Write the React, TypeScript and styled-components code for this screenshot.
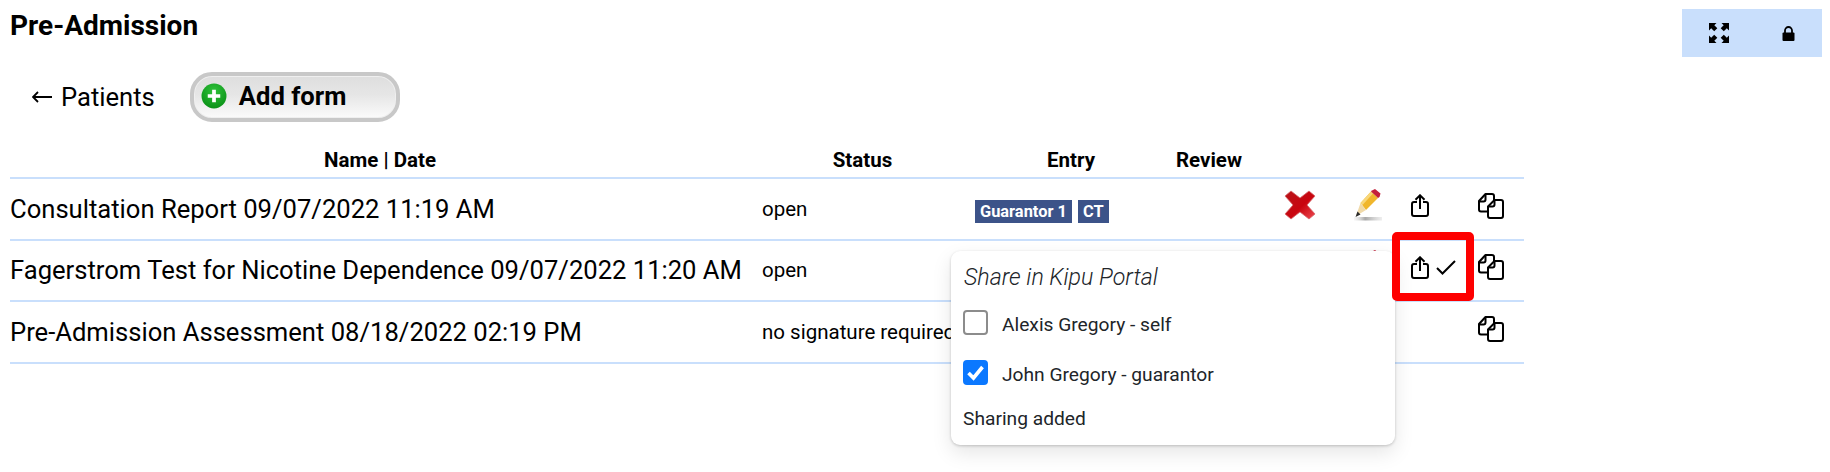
import styled, { createGlobalStyle } from 'styled-components';

const rows = [
  {
    name: 'Consultation Report 09/07/2022 11:19 AM',
    status: 'open',
    badges: ['Guarantor 1', 'CT'],
    editable: true,
    shared: false,
    shareable: true,
  },
  {
    name: 'Fagerstrom Test for Nicotine Dependence 09/07/2022 11:20 AM',
    status: 'open',
    badges: [],
    editable: true,
    shared: true,
    shareable: true,
  },
  {
    name: 'Pre-Admission Assessment 08/18/2022 02:19 PM',
    status: 'no signature required',
    badges: [],
    editable: false,
    shared: false,
    shareable: false,
  },
];

const checkMark =
  "data:image/svg+xml,%3Csvg xmlns='http://www.w3.org/2000/svg' viewBox='0 0 25 25'%3E%3Cpath d='M5.500 13l5 5 9-11' fill='none' stroke='%23fff' stroke-width='3.600'/%3E%3C/svg%3E";

function DeleteIcon() {
  return (
    <svg width="32" height="32" viewBox="0 0 32 32">
      <defs>
        <linearGradient id="xRed" x1="0" y1="0" x2="1" y2="1">
          <stop offset="0" stopColor="#b81419" />
          <stop offset="0.55" stopColor="#c9050f" />
          <stop offset="1" stopColor="#ee4a52" />
        </linearGradient>
      </defs>
      <path
        d="M7 2 16 9 25 2 31 7 23 16 31 25 25 30 16 23 7 30 1 25 9 16 1 7Z"
        fill="url(#xRed)"
        stroke="#d6686c"
        strokeWidth="0.8"
        strokeLinejoin="round"
      />
    </svg>
  );
}

function EditIcon() {
  return (
    <svg width="30" height="32" viewBox="0 0 30 32">
      <defs>
        <linearGradient id="pencilShadow" x1="0" y1="0" x2="1" y2="0">
          <stop offset="0" stopColor="#d8d8d8" stopOpacity="0.2" />
          <stop offset="0.4" stopColor="#a8a8a8" />
          <stop offset="1" stopColor="#c8c8c8" stopOpacity="0.3" />
        </linearGradient>
      </defs>
      <rect x="1" y="28" width="28" height="3.500" fill="url(#pencilShadow)" />
      <path d="M7.500 14 18 2.500 25 9 13 21Z" fill="#f0b62c" />
      <path d="M7.500 14 18 2.500 20 4.500 9.500 16Z" fill="#f8d77a" />
      <path d="M7.500 14 13 21 3 27Z" fill="#f0d9a8" />
      <path d="M4.500 22.500 7.500 25.500 2.500 28Z" fill="#2c2c2c" />
      <path d="M19 1.500 22 0 27.500 4.500 26.500 8 25 9 18 2.500Z" fill="#c4203a" />
    </svg>
  );
}

function ShareIcon() {
  return (
    <svg width="18" height="23" viewBox="0 0 18 23" fill="none" stroke="#000" strokeWidth="2">
      <path d="M6 8H3a2 2 0 0 0-2 2v10a2 2 0 0 0 2 2h12a2 2 0 0 0 2-2V10a2 2 0 0 0-2-2h-3" />
      <path d="M9 15V1.500M4.500 5.800 9 1.300l4.500 4.500" />
    </svg>
  );
}

function CheckIcon() {
  return (
    <svg width="20" height="15" viewBox="0 0 20 15" fill="none" stroke="#000" strokeWidth="2">
      <path d="M1 8l5.500 5.500L19 1" />
    </svg>
  );
}

function CopyIcon() {
  return (
    <svg width="26" height="26" viewBox="0 0 26 26" fill="none" stroke="#000" strokeWidth="2" strokeLinejoin="round">
      <path d="M10 18.500H3a2 2 0 0 1-2-2V8l6.500-7H14a2 2 0 0 1 2 2v4" />
      <path d="M7.500 1v5.500a2 2 0 0 1-2 2H1" />
      <path d="M16.500 7H23a2 2 0 0 1 2 2v14a2 2 0 0 1-2 2H12a2 2 0 0 1-2-2V13.500Z" />
      <path d="M16.500 7v4.500a2 2 0 0 1-2 2H10" />
    </svg>
  );
}

function BackArrow() {
  return (
    <svg width="20" height="12" viewBox="0 0 20 12" fill="none" stroke="#000">
      <path d="M1 6h19" strokeWidth="2" />
      <path d="M6 1 1 6l5 5" strokeWidth="1.800" />
    </svg>
  );
}

function ExpandIcon() {
  return (
    <svg width="20" height="20" viewBox="0 0 20 20" fill="#000">
      <path d="M0 0H7.500L5.300 2.200 8.300 5.200 5.200 8.300 2.200 5.300 0 7.500Z" />
      <path d="M20 0H12.500L14.700 2.200 11.700 5.200 14.800 8.300 17.800 5.300 20 7.500Z" />
      <path d="M0 20H7.500L5.300 17.800 8.300 14.800 5.200 11.700 2.200 14.700 0 12.500Z" />
      <path d="M20 20H12.500L14.700 17.800 11.700 14.800 14.800 11.700 17.800 14.700 20 12.500Z" />
    </svg>
  );
}

function LockIcon() {
  return (
    <svg width="13" height="15" viewBox="0 0 13 15">
      <path d="M3 7V4.500a3.500 3.500 0 0 1 7 0V7" fill="none" stroke="#000" strokeWidth="1.800" />
      <rect x="0.500" y="6.500" width="12" height="8.500" rx="1" fill="#000" />
    </svg>
  );
}

function AddIcon() {
  return (
    <svg width="26" height="26" viewBox="0 0 25 25">
      <defs>
        <radialGradient id="addGreen" cx="0.5" cy="0.3" r="0.8">
          <stop offset="0" stopColor="#2fc23a" />
          <stop offset="1" stopColor="#058a12" />
        </radialGradient>
      </defs>
      <circle cx="12.500" cy="12.500" r="12" fill="url(#addGreen)" />
      <path d="M10.700 6.500h3.600v4.200h4.200v3.600h-4.200v4.200h-3.600v-4.200H6.500v-3.600h4.200Z" fill="#fff" />
    </svg>
  );
}

export default function App() {
  return (
    <>
      <GlobalStyle />
      <Page>
        <TopBar>
          <Title>Pre-Admission</Title>
          <ViewTools>
            <ExpandIcon />
            <LockIcon />
          </ViewTools>
        </TopBar>
        <NavRow>
          <BackLink>
            <BackArrow />
            Patients
          </BackLink>
          <AddFormButton>
            <AddIcon />
            Add form
          </AddFormButton>
        </NavRow>
        <FormsTable>
          <colgroup>
            <col style={{ width: 740 }} />
            <col style={{ width: 225 }} />
            <col style={{ width: 192 }} />
            <col style={{ width: 84 }} />
            <col style={{ width: 98 }} />
            <col style={{ width: 38 }} />
            <col style={{ width: 73 }} />
            <col style={{ width: 64 }} />
          </colgroup>
          <thead>
            <tr>
              <HeadCell>Name | Date</HeadCell>
              <HeadCell>Status</HeadCell>
              <HeadCell>Entry</HeadCell>
              <HeadCell>Review</HeadCell>
              <HeadCell />
              <HeadCell />
              <HeadCell />
              <HeadCell />
            </tr>
          </thead>
          <tbody>
            {rows.map((row) => (
              <tr key={row.name}>
                <NameCell>{row.name}</NameCell>
                <StatusCell>
                  <StatusText>{row.status}</StatusText>
                </StatusCell>
                <EntryCell>
                  <BadgeList>
                    {row.badges.map((badge) => (
                      <Badge key={badge}>{badge}</Badge>
                    ))}
                  </BadgeList>
                </EntryCell>
                <BodyCell />
                <IconCell>{row.editable && <DeleteIcon />}</IconCell>
                <IconCell>{row.editable && <EditIcon />}</IconCell>
                <ShareCell>
                  {row.shareable && (
                    <ShareGroup>
                      <ShareIcon />
                      {row.shared && <CheckIcon />}
                    </ShareGroup>
                  )}
                </ShareCell>
                <CopyCell>
                  <CopyIcon />
                </CopyCell>
              </tr>
            ))}
          </tbody>
        </FormsTable>
        <SharePopover>
          <PopoverTitle>Share in Kipu Portal</PopoverTitle>
          <ShareOption>
            <ShareCheckbox type="checkbox" />
            <OptionText>Alexis Gregory - self</OptionText>
          </ShareOption>
          <ShareOption>
            <ShareCheckbox type="checkbox" defaultChecked />
            <OptionText>John Gregory - guarantor</OptionText>
          </ShareOption>
          <PopoverStatus>Sharing added</PopoverStatus>
        </SharePopover>
        <Highlight />
      </Page>
    </>
  );
}

const GlobalStyle = createGlobalStyle`
  html, body {
    margin: 0;
    background: #fff;
  }
  body {
    font-family: Roboto, "Liberation Sans", sans-serif;
    color: #000;
  }
`;

const Page = styled.div`
  position: relative;
  width: 1830px;
  height: 472px;
  overflow: hidden;
  padding: 9px 8px 0 10px;
  box-sizing: border-box;
`;

const TopBar = styled.div`
  display: flex;
  justify-content: space-between;
  align-items: flex-start;
`;

const Title = styled.h1`
  margin: 0;
  font-size: 28px;
  line-height: 34px;
  font-weight: 700;
`;

const ViewTools = styled.div`
  width: 140px;
  height: 48px;
  display: flex;
  align-items: center;
  justify-content: space-around;
  background: #c9dffc;
`;

const NavRow = styled.div`
  display: flex;
  align-items: center;
  gap: 35px;
  margin-top: 15px;
  padding-left: 22px;
`;

const BackLink = styled.a`
  display: flex;
  align-items: center;
  gap: 9px;
  font-size: 25.6px;
  line-height: 28px;
  color: #000;
`;

const AddFormButton = styled.button`
  width: 210px;
  height: 50px;
  box-sizing: border-box;
  display: flex;
  align-items: center;
  gap: 12px;
  padding: 0 0 2px 7px;
  border: 4px solid #c8c8c8;
  border-radius: 22px;
  box-shadow: inset 0 0 0 1px #efefef;
  background: linear-gradient(#dedede, #e6e6e6 45%, #fbfbfb);
  font: 700 25.6px Roboto, sans-serif;
  color: #000;
`;

const FormsTable = styled.table`
  width: 1514px;
  table-layout: fixed;
  border-collapse: collapse;
`;

const HeadCell = styled.th`
  box-sizing: border-box;
  height: 56px;
  padding: 0 0 5px;
  vertical-align: bottom;
  font-size: 20.500px;
  line-height: 24px;
  font-weight: 700;
  text-align: center;
  border-bottom: 2px solid #c9dffc;
`;

const BodyCell = styled.td`
  box-sizing: border-box;
  height: 61.600px;
  padding: 0;
  vertical-align: middle;
  border-bottom: 2px solid #c9dffc;
`;

const NameCell = styled(BodyCell)`
  font-size: 25.6px;
  white-space: nowrap;
`;

const StatusCell = styled(BodyCell)`
  padding-left: 12px;
`;

const StatusText = styled.span`
  font-size: 20.500px;
  white-space: nowrap;
`;

const EntryCell = styled(BodyCell)`
  padding-top: 6px;
`;

const BadgeList = styled.div`
  display: flex;
  gap: 6px;
`;

const Badge = styled.span`
  height: 23px;
  padding: 0 5px;
  background: #3c5389;
  color: #fff;
  font-size: 16.400px;
  line-height: 23px;
  font-weight: 700;
`;

const IconCell = styled(BodyCell)`
  padding-bottom: 8px;
  svg {
    display: block;
    margin: 0 auto;
  }
`;

const ShareCell = styled(BodyCell)`
  padding: 0 0 6px 24px;
`;

const ShareGroup = styled.div`
  display: flex;
  align-items: center;
  gap: 7px;
`;

const CopyCell = styled(BodyCell)`
  padding: 0 0 6px 18px;
  svg {
    display: block;
  }
`;

const SharePopover = styled.div`
  position: absolute;
  left: 951px;
  top: 251px;
  width: 444px;
  height: 194px;
  box-sizing: border-box;
  padding: 12px;
  background: #fff;
  border-radius: 9px;
  box-shadow: 0 1px 3px rgba(0, 0, 0, 0.2), 0 8px 20px rgba(0, 0, 0, 0.1);
  color: #212529;
`;

const PopoverTitle = styled.div`
  padding-left: 1px;
  font-size: 23.200px;
  line-height: 28px;
  font-style: italic;
  font-weight: 300;
`;

const ShareOption = styled.label`
  display: flex;
  align-items: center;
  gap: 14px;
  height: 25px;
  margin-top: 19px;
  font-size: 19.200px;

  & + & {
    margin-top: 25px;
  }
`;

const OptionText = styled.span`
  margin-top: 3px;
`;

const ShareCheckbox = styled.input`
  appearance: none;
  width: 25px;
  height: 25px;
  margin: 0;
  box-sizing: border-box;
  border: 2px solid #8c8c8c;
  border-radius: 4px;
  background: #fff;

  &:checked {
    border-color: #0b78ff;
    background: #0b78ff url("${checkMark}") center / 25px 25px no-repeat;
  }
`;

const PopoverStatus = styled.div`
  margin-top: 22px;
  font-size: 19.200px;
  line-height: 24px;
`;

const Highlight = styled.div`
  position: absolute;
  left: 1392px;
  top: 232px;
  width: 82px;
  height: 69px;
  box-sizing: border-box;
  border: 8px solid #fe0000;
  border-radius: 5px;
`;
